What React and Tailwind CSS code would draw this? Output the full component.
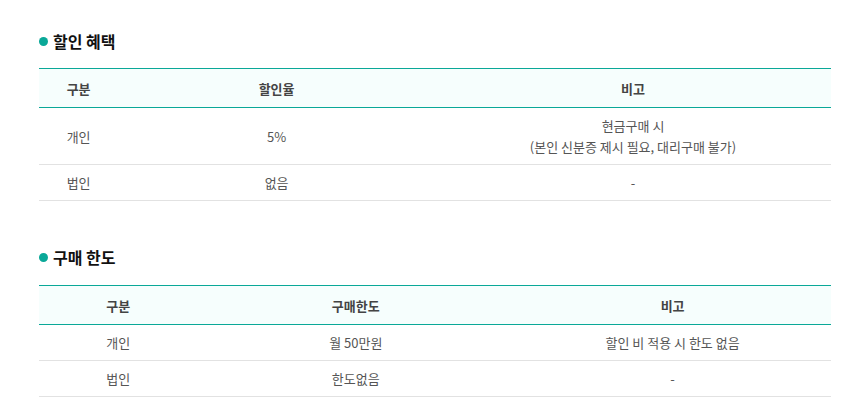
import React from 'react';

const font = { fontFamily: '"Malgun Gothic", "Noto Sans CJK KR", sans-serif' };

const discountRows = [
    { type: '개인', value: '5%', note: ['현금구매 시', '(본인 신분증 제시 필요, 대리구매 불가)'] },
    { type: '법인', value: '없음', note: ['-'] },
];

const limitRows = [
    { type: '개인', value: '월 50만원', note: ['할인 비 적용 시 한도 없음'] },
    { type: '법인', value: '한도없음', note: ['-'] },
];

const SectionTitle = ({ children }) => (
    <h3 className="flex items-center gap-[5px] text-[16px] font-bold text-[#111] leading-[22px]">
        <span className="shrink-0 w-[9px] h-[9px] rounded-full bg-[#0aa898]" />
        {children}
    </h3>
);

const InfoTable = ({ headers, widths, rows }) => (
    <table className="w-full table-fixed border-collapse text-[13px] text-[#555] leading-[21px]">
        <colgroup>
            {widths.map((w, i) => (
                <col key={i} className={w} />
            ))}
        </colgroup>
        <thead>
            <tr className="bg-[#f6fefd] border-t border-b border-[#0aa898]">
                {headers.map(h => (
                    <th key={h} className="pt-[9px] pb-[8px] font-bold text-[#444] text-center">{h}</th>
                ))}
            </tr>
        </thead>
        <tbody>
            {rows.map(r => (
                <tr key={r.type} className="border-b border-[#e2e2e2]">
                    <td className="py-[7px] text-center">{r.type}</td>
                    <td className="py-[7px] text-center">{r.value}</td>
                    <td className="py-[7px] text-center">
                        {r.note.map(n => (
                            <div key={n}>{n}</div>
                        ))}
                    </td>
                </tr>
            ))}
        </tbody>
    </table>
);

const App = () => {
    return (
        <div className="w-[859px] h-[418px] bg-white pl-[39px] pr-[28px] pt-[30px]" style={font}>
            <SectionTitle>할인 혜택</SectionTitle>
            <div className="mt-[16px]">
                <InfoTable
                    headers={['구분', '할인율', '비고']}
                    widths={['w-[10%]', 'w-[40%]', 'w-[50%]']}
                    rows={discountRows}
                />
            </div>

            <div className="mt-[45px]">
                <SectionTitle>구매 한도</SectionTitle>
            </div>
            <div className="mt-[17px]">
                <InfoTable
                    headers={['구분', '구매한도', '비고']}
                    widths={['w-[20%]', 'w-[40%]', 'w-[40%]']}
                    rows={limitRows}
                />
            </div>
        </div>
    );
};

export default App;
